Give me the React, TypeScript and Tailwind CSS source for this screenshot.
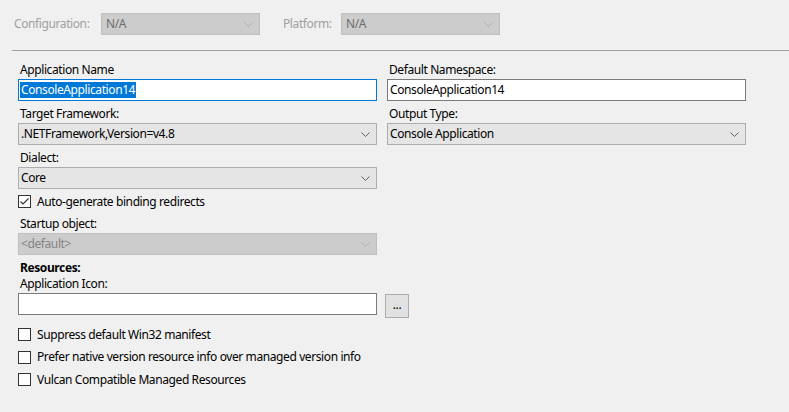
import React from "react";

const font = { fontFamily: '"Segoe UI", "Noto Sans", sans-serif' };

function Chevron({ className }: { className?: string }) {
  return (
    <svg viewBox="0 0 9 5" className={className} fill="none">
      <path d="M0.5 0.5L4.5 4.5L8.5 0.5" stroke="currentColor" strokeWidth="1" />
    </svg>
  );
}

function Combo({
  value,
  disabled,
  width = "w-[359px]",
}: {
  value: string;
  disabled?: boolean;
  width?: string;
}) {
  return (
    <div
      className={`${width} h-[22px] flex items-center justify-between border ${
        disabled
          ? "bg-[#cccccc] border-[#bfbfbf] text-[#838383]"
          : "bg-[#e5e5e5] border-[#adadad] text-black"
      } pl-[2px] pr-[6px] text-[12px] leading-[16px]`}
    >
      <span>{value}</span>
      <Chevron
        className={`w-[9px] h-[5px] ${disabled ? "text-[#b0b0b0]" : "text-[#606060]"}`}
      />
    </div>
  );
}

function Label({ children, bold }: { children: React.ReactNode; bold?: boolean }) {
  return (
    <div
      className={`h-[16px] pl-[2px] text-[12px] leading-[16px] text-black ${
        bold ? "font-bold" : ""
      }`}
    >
      {children}
    </div>
  );
}

function CheckBox({ label, checked }: { label: string; checked?: boolean }) {
  return (
    <div className="flex items-center h-[13px]">
      <div className="w-[13px] h-[13px] border border-[#333333] bg-white flex items-center justify-center">
        {checked && (
          <svg viewBox="0 0 11 11" className="w-[11px] h-[11px]" fill="none">
            <path d="M1.5 5.5L4 8L9.5 2.5" stroke="#333333" strokeWidth="1.2" />
          </svg>
        )}
      </div>
      <span className="ml-[6px] text-[12px] leading-[16px] text-black">{label}</span>
    </div>
  );
}

export default function App() {
  return (
    <div
      className="w-[789px] h-[412px] bg-[#f0f0f0] overflow-hidden tracking-[-0.4px]"
      style={font}
    >
      {/* Configuration bar */}
      <div className="flex items-center pt-[13px] pl-[14px] h-[35px] text-[12px]">
        <span className="text-[#a0a0a0] w-[87px]">Configuration:</span>
        <div className="w-[159px] h-[22px] flex items-center justify-between bg-[#cccccc] border border-[#bfbfbf] pl-[4px] pr-[6px] text-[#6d6d6d]">
          <span>N/A</span>
          <Chevron className="w-[9px] h-[5px] text-[#b0b0b0]" />
        </div>
        <span className="text-[#a0a0a0] ml-[23px] w-[58px]">Platform:</span>
        <div className="w-[159px] h-[22px] flex items-center justify-between bg-[#cccccc] border border-[#bfbfbf] pl-[4px] pr-[6px] text-[#6d6d6d]">
          <span>N/A</span>
          <Chevron className="w-[9px] h-[5px] text-[#b0b0b0]" />
        </div>
      </div>
      <div className="ml-[12px] mt-[15px] h-px bg-[#a0a0a0]" />

      <div className="pl-[18px] pt-[11px]">
        <div className="flex gap-[10px]">
          {/* left column */}
          <div className="w-[359px] flex flex-col">
            <Label>Application Name</Label>
            <div className="mt-px h-[22px] border border-[#0078d7] bg-white flex items-center pl-[1px] text-[12px]">
              <span className="bg-[#0078d7] text-white leading-[16px] px-px">
                ConsoleApplication14
              </span>
            </div>
            <div className="mt-[5px]">
              <Label>Target Framework:</Label>
            </div>
            <div className="mt-px">
              <Combo value=".NETFramework,Version=v4.8" />
            </div>
            <div className="mt-[5px]">
              <Label>Dialect:</Label>
            </div>
            <div className="mt-px">
              <Combo value="Core" />
            </div>
          </div>
          {/* right column */}
          <div className="w-[359px] flex flex-col">
            <Label>Default Namespace:</Label>
            <div className="mt-px h-[22px] border border-[#7a7a7a] bg-white flex items-center pl-[2px] text-[12px]">
              ConsoleApplication14
            </div>
            <div className="mt-[5px]">
              <Label>Output Type:</Label>
            </div>
            <div className="mt-px">
              <Combo value="Console Application" />
            </div>
          </div>
        </div>

        <div className="mt-[6px]">
          <CheckBox label="Auto-generate binding redirects" checked />
        </div>
        <div className="mt-[8px]">
          <Label>Startup object:</Label>
        </div>
        <div className="mt-px">
          <Combo value="<default>" disabled />
        </div>
        <div className="mt-[5px]">
          <Label bold>Resources:</Label>
        </div>
        <Label>Application Icon:</Label>
        <div className="mt-px flex items-start">
          <div className="w-[359px] h-[22px] border border-[#7a7a7a] bg-white" />
          <button className="ml-[8px] mt-px w-[24px] h-[24px] border border-[#adadad] bg-[#e1e1e1] text-[12px] leading-[12px] text-black flex items-end justify-center pb-[6px]">
            ...
          </button>
        </div>
        <div className="mt-[10px] flex flex-col gap-[9.5px]">
          <CheckBox label="Suppress default Win32 manifest" />
          <CheckBox label="Prefer native version resource info over managed version info" />
          <CheckBox label="Vulcan Compatible Managed Resources" />
        </div>
      </div>
    </div>
  );
}
